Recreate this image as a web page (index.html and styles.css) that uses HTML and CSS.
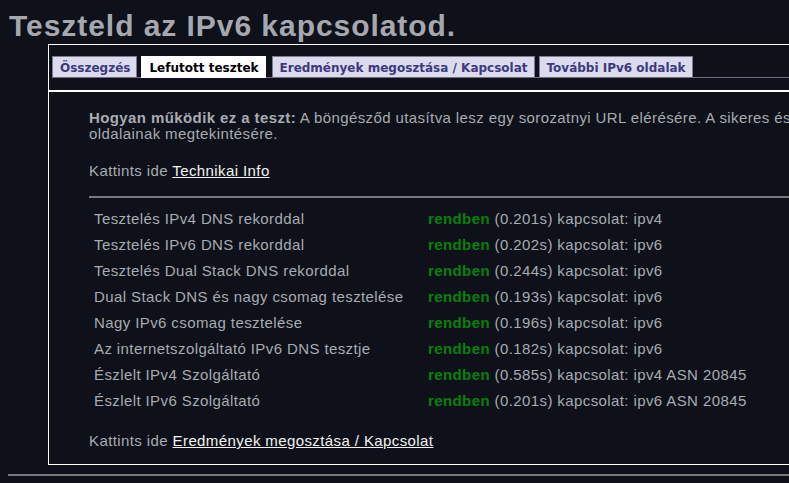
FILE: index.html
```html
<!DOCTYPE html>
<html lang="hu">
<head>
<meta charset="utf-8">
<title>Teszteld az IPv6 kapcsolatod.</title>
<link rel="stylesheet" href="styles.css">
</head>
<body>
<h1 class="title">Teszteld az IPv6 kapcsolatod.</h1>
<div class="frame">
  <div class="tabbar">
    <ul class="tabs">
      <li class="tab"><a href="#">Összegzés</a></li>
      <li class="tab active"><a href="#">Lefutott tesztek</a></li>
      <li class="tab"><a href="#">Eredmények megosztása / Kapcsolat</a></li>
      <li class="tab"><a href="#">További IPv6 oldalak</a></li>
    </ul>
  </div>
  <div class="content">
    <p class="intro"><b>Hogyan működik ez a teszt:</b> A böngésződ utasítva lesz egy sorozatnyi URL elérésére. A sikeres és sikertelen kapcsolatok alapján kiderül, mennyire vagy felkészülve az IPv6-os<br>oldalainak megtekintésére.</p>
    <p class="more">Kattints ide <a href="#">Technikai Info</a></p>
    <hr class="sep">
    <table class="results">
      <tr><td class="name">Tesztelés IPv4 DNS rekorddal</td><td><b class="ok">rendben</b> (0.201s) kapcsolat: ipv4</td></tr>
      <tr><td class="name">Tesztelés IPv6 DNS rekorddal</td><td><b class="ok">rendben</b> (0.202s) kapcsolat: ipv6</td></tr>
      <tr><td class="name">Tesztelés Dual Stack DNS rekorddal</td><td><b class="ok">rendben</b> (0.244s) kapcsolat: ipv6</td></tr>
      <tr><td class="name">Dual Stack DNS és nagy csomag tesztelése</td><td><b class="ok">rendben</b> (0.193s) kapcsolat: ipv6</td></tr>
      <tr><td class="name">Nagy IPv6 csomag tesztelése</td><td><b class="ok">rendben</b> (0.196s) kapcsolat: ipv6</td></tr>
      <tr><td class="name">Az internetszolgáltató IPv6 DNS tesztje</td><td><b class="ok">rendben</b> (0.182s) kapcsolat: ipv6</td></tr>
      <tr><td class="name">Észlelt IPv4 Szolgáltató</td><td><b class="ok">rendben</b> (0.585s) kapcsolat: ipv4 ASN 20845</td></tr>
      <tr><td class="name">Észlelt IPv6 Szolgáltató</td><td><b class="ok">rendben</b> (0.201s) kapcsolat: ipv6 ASN 20845</td></tr>
    </table>
    <p class="more share">Kattints ide <a href="#">Eredmények megosztása / Kapcsolat</a></p>
  </div>
</div>
<hr class="bottom">
</body>
</html>
```
FILE: styles.css
```css
html, body {
  overflow: hidden;
}
body {
  margin: 8px;
  background: #0e1119;
  color: #a8abb1;
  font-family: "Liberation Sans", Arial, sans-serif;
  font-size: 15px;
  letter-spacing: 0.4px;
  width: 2200px;
}
.title {
  margin: 0 0 0 1px;
  font-size: 30px;
  line-height: 36px;
  font-weight: bold;
  letter-spacing: 0.95px;
  color: #a5a8ae;
}
.frame {
  margin-left: 40px;
  width: 2100px;
  border-top: 1px solid #ffffff;
  border-left: 1px solid #ffffff;
  border-bottom: 1px solid #ffffff;
}
.tabbar {
  padding: 11px 0 12px 3px;
}
.tabs {
  display: flex;
  gap: 4px;
  list-style: none;
  margin: 0;
  padding: 0;
  border-bottom: 1px solid #6e6e80;
}
.tab a {
  display: block;
  height: 21px;
  box-sizing: border-box;
  padding: 4px 6px 0 7px;
  border: 1px solid #7c7c92;
  border-bottom: none;
  background: #dcdbee;
  color: #3b3a7c;
  font-family: "DejaVu Sans", Verdana, sans-serif;
  font-size: 12px;
  line-height: 14px;
  font-weight: bold;
  letter-spacing: 0;
  text-decoration: none;
}
.tab.active {
  margin-right: 2px;
}
.tab.active a {
  background: #ffffff;
  color: #000000;
  border-color: #ffffff;
  height: 22px;
  margin-bottom: -1px;
}
.content {
  border-top: 2px solid #ffffff;
  padding: 18px 0 15px 40px;
}
.content p {
  margin: 0;
  line-height: 16px;
}
.more {
  margin-top: 21px !important;
}
.more a {
  color: #f2f2f2;
  text-decoration: underline;
}
.sep {
  margin: 17px 0 8px;
  border: none;
  border-top: 2px solid #7a7a7a;
  height: 0;
}
.results {
  border-collapse: collapse;
}
.results td {
  padding: 5px;
  line-height: 16px;
  white-space: nowrap;
}
.results td.name {
  width: 324px;
}
.ok {
  color: #078207;
}
.share {
  margin-top: 19px !important;
}
.bottom {
  margin: 9px 0 0;
  border: none;
  border-top: 2px solid #7a7a7a;
  height: 0;
}
```
